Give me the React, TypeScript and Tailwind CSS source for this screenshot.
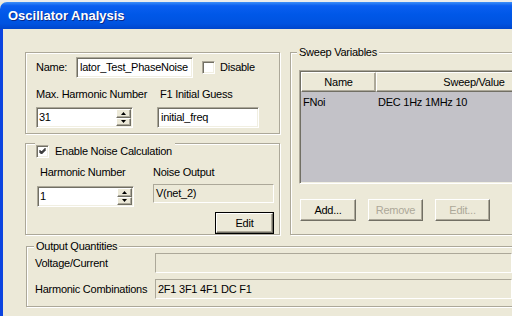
import React from 'react';

const sunken =
  'border border-t-[#aca899] border-l-[#aca899] border-b-white border-r-white shadow-[inset_1px_1px_0_#716f64,inset_-1px_-1px_0_#f1efe2]';
const flat = 'border border-t-[#aca899] border-l-[#aca899] border-b-white border-r-white';
const raised =
  'border border-t-white border-l-white border-b-[#716f64] border-r-[#716f64] shadow-[inset_-1px_-1px_0_#aca899] bg-[#ece9d8]';
const groove = 'border border-[#aca899] shadow-[inset_1px_1px_0_#fff,1px_1px_0_#fff]';

function Check({ checked }: { checked?: boolean }) {
  return (
    <div className={`w-[13px] h-[13px] bg-white shrink-0 flex items-center justify-center ${sunken}`}>
      {checked && (
        <svg width="9" height="9" viewBox="0 0 9 9">
          <path d="M1.5 4 L3.5 6 L7.5 2 M1.5 5 L3.5 7 L7.5 3 M1.5 3 L3.5 5 L7.5 1" stroke="#000" strokeWidth="1" fill="none" />
        </svg>
      )}
    </div>
  );
}

function Spinner({ value }: { value: string }) {
  return (
    <div className={`w-[97px] h-[21px] bg-white flex items-stretch pl-[2px] ${sunken}`}>
      <span className="flex-1 leading-[19px]">{value}</span>
      <div className="flex flex-col w-[16px] py-[1px] pr-[1px]">
        <div className={`flex-1 flex items-center justify-center ${raised}`}>
          <svg width="5" height="3" viewBox="0 0 5 3"><path d="M2.5 0 L5 3 L0 3 Z" fill="#000" /></svg>
        </div>
        <div className={`flex-1 flex items-center justify-center ${raised}`}>
          <svg width="5" height="3" viewBox="0 0 5 3"><path d="M0 0 L5 0 L2.5 3 Z" fill="#000" /></svg>
        </div>
      </div>
    </div>
  );
}

export default function App() {
  return (
    <div className="w-[512px] h-[316px] overflow-hidden bg-[#ece9d8] flex flex-col text-[11px] tracking-[-0.25px] text-black font-['Liberation_Sans',Arial,sans-serif]">
      <div className="h-[2px] bg-[#ebebeb] shrink-0" />
      <div className="h-[27px] shrink-0 rounded-tl-[7px] flex items-center pl-[8px] bg-[linear-gradient(to_bottom,#3d8ff8_0%,#0b5ef0_14%,#0058e8_45%,#0053e0_80%,#0046cc_100%)]">
        <span className="text-white font-bold text-[13px] tracking-normal [text-shadow:1px_1px_0_#0a2a8a]">Oscillator Analysis</span>
      </div>
      <div className="flex-1 flex flex-col border-l-[3px] border-[#0b44e0]">
        <div className="flex pl-[22px] pt-[23px]">
          {/* left column */}
          <div className="w-[255px] flex flex-col gap-[9px]">
            <div className={`h-[82px] pt-[4px] pl-[10px] ${groove}`}>
              <div className="flex items-center h-[21px]">
                <span className="w-[40px]">Name:</span>
                <div className={`w-[117px] h-[21px] bg-white pl-[3px] leading-[19px] overflow-hidden whitespace-nowrap ${sunken}`}>
                  lator_Test_PhaseNoise
                </div>
                <div className="ml-[9px]"><Check /></div>
                <span className="ml-[5px]">Disable</span>
              </div>
              <div className="flex mt-[10px] h-[13px] leading-[13px]">
                <span className="w-[124px]">Max. Harmonic Number</span>
                <span>F1 Initial Guess</span>
              </div>
              <div className="flex mt-[6px]">
                <Spinner value="31" />
                <div className={`ml-[24px] w-[102px] h-[21px] bg-white pl-[3px] leading-[19px] ${sunken}`}>initial_freq</div>
              </div>
            </div>

            <div className={`relative h-[92px] pt-[22px] pl-[11px] pr-[5px] ${groove}`}>
              <div className="absolute left-[9px] top-[-2px] h-[18px] px-[1px] pr-[3px] flex items-center bg-[#ece9d8]">
                <Check checked />
                <span className="ml-[6px]">Enable Noise Calculation</span>
              </div>
              <div className="flex h-[13px] leading-[13px]">
                <span className="ml-[3px] w-[113px]">Harmonic Number</span>
                <span>Noise Output</span>
              </div>
              <div className="flex mt-[5px]">
                <div className="mt-[2px]"><Spinner value="1" /></div>
                <div className={`ml-[19px] w-[123px] h-[19px] pl-[2px] leading-[17px] ${flat}`}>V(net_2)</div>
              </div>
              <div className="flex justify-end mt-[5px]">
                <div className="w-[59px] h-[22px] border border-black">
                  <div className={`h-full flex items-center justify-center ${raised}`}>Edit</div>
                </div>
              </div>
            </div>
          </div>

          {/* right group */}
          <div className={`relative ml-[10px] w-[260px] shrink-0 h-[183px] pt-[17px] pl-[8px] ${groove}`}>
            <div className="absolute left-[6px] top-[-8px] px-[2px] bg-[#ece9d8] leading-[14px]">Sweep Variables</div>
            <div className={`h-[114px] bg-[#c3c2c8] overflow-hidden ${sunken} p-[1px]`}>
              <div className="flex h-[20px] bg-[#ece9d8]">
                <div className={`w-[75px] shrink-0 flex items-center justify-center ${raised} border-r-[#aca899]`}>Name</div>
                <div className={`w-[196px] shrink-0 flex items-center justify-center ${raised}`}>Sweep/Value</div>
              </div>
              <div className="flex h-[18px] items-center mt-[1px]">
                <span className="w-[77px] pl-[2px]">FNoi</span>
                <span>DEC 1Hz 1MHz 10</span>
              </div>
            </div>
            <div className="flex mt-[15px] ml-[1px] gap-[12px]">
              <div className={`w-[56px] h-[22px] flex items-center justify-center ${raised}`}>Add...</div>
              <div className={`w-[55px] h-[22px] flex items-center justify-center text-[#aca899] ${raised}`}>Remove</div>
              <div className={`w-[55px] h-[22px] flex items-center justify-center text-[#aca899] ${raised}`}>Edit...</div>
            </div>
          </div>
        </div>

        {/* output quantities */}
        <div className={`relative ml-[23px] mt-[11px] w-[500px] h-[61px] pt-[6px] pl-[8px] ${groove}`}>
          <div className="absolute left-[7px] top-[-8px] px-[2px] bg-[#ece9d8] leading-[14px]">Output Quantities</div>
          <div className="flex items-center h-[20px]">
            <span className="w-[120px]">Voltage/Current</span>
            <div className={`w-[357px] h-[20px] ${flat}`} />
          </div>
          <div className="flex items-center h-[20px] mt-[6px]">
            <span className="w-[120px]">Harmonic Combinations</span>
            <div className={`w-[357px] h-[20px] pl-[2px] leading-[18px] ${flat}`}>2F1 3F1 4F1 DC F1</div>
          </div>
        </div>
      </div>
    </div>
  );
}
